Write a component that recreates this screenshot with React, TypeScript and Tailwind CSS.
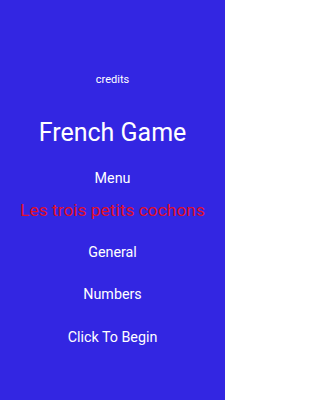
export default function App() {
  return (
    <div
      className="w-[225px] h-[400px] bg-[#3326e2] flex flex-col items-center pt-[72px] text-white"
      style={{ fontFamily: "Roboto, 'Noto Sans', sans-serif" }}
    >
      <div className="text-[11px] leading-[16px]">credits</div>
      <div className="mt-[30px] text-[25px] leading-[30px]">French Game</div>
      <div className="mt-[20px] text-[14.3px] leading-[20px]">Menu</div>
      <div className="mt-[10px] text-[17.4px] leading-[24px] text-[#e0102a] whitespace-nowrap">Les trois petits cochons</div>
      <div className="mt-[20px] text-[14.3px] leading-[20px]">General</div>
      <div className="mt-[22px] text-[14.3px] leading-[20px]">Numbers</div>
      <div className="mt-[23px] text-[14.3px] leading-[20px]">Click To Begin</div>
    </div>
  );
}
